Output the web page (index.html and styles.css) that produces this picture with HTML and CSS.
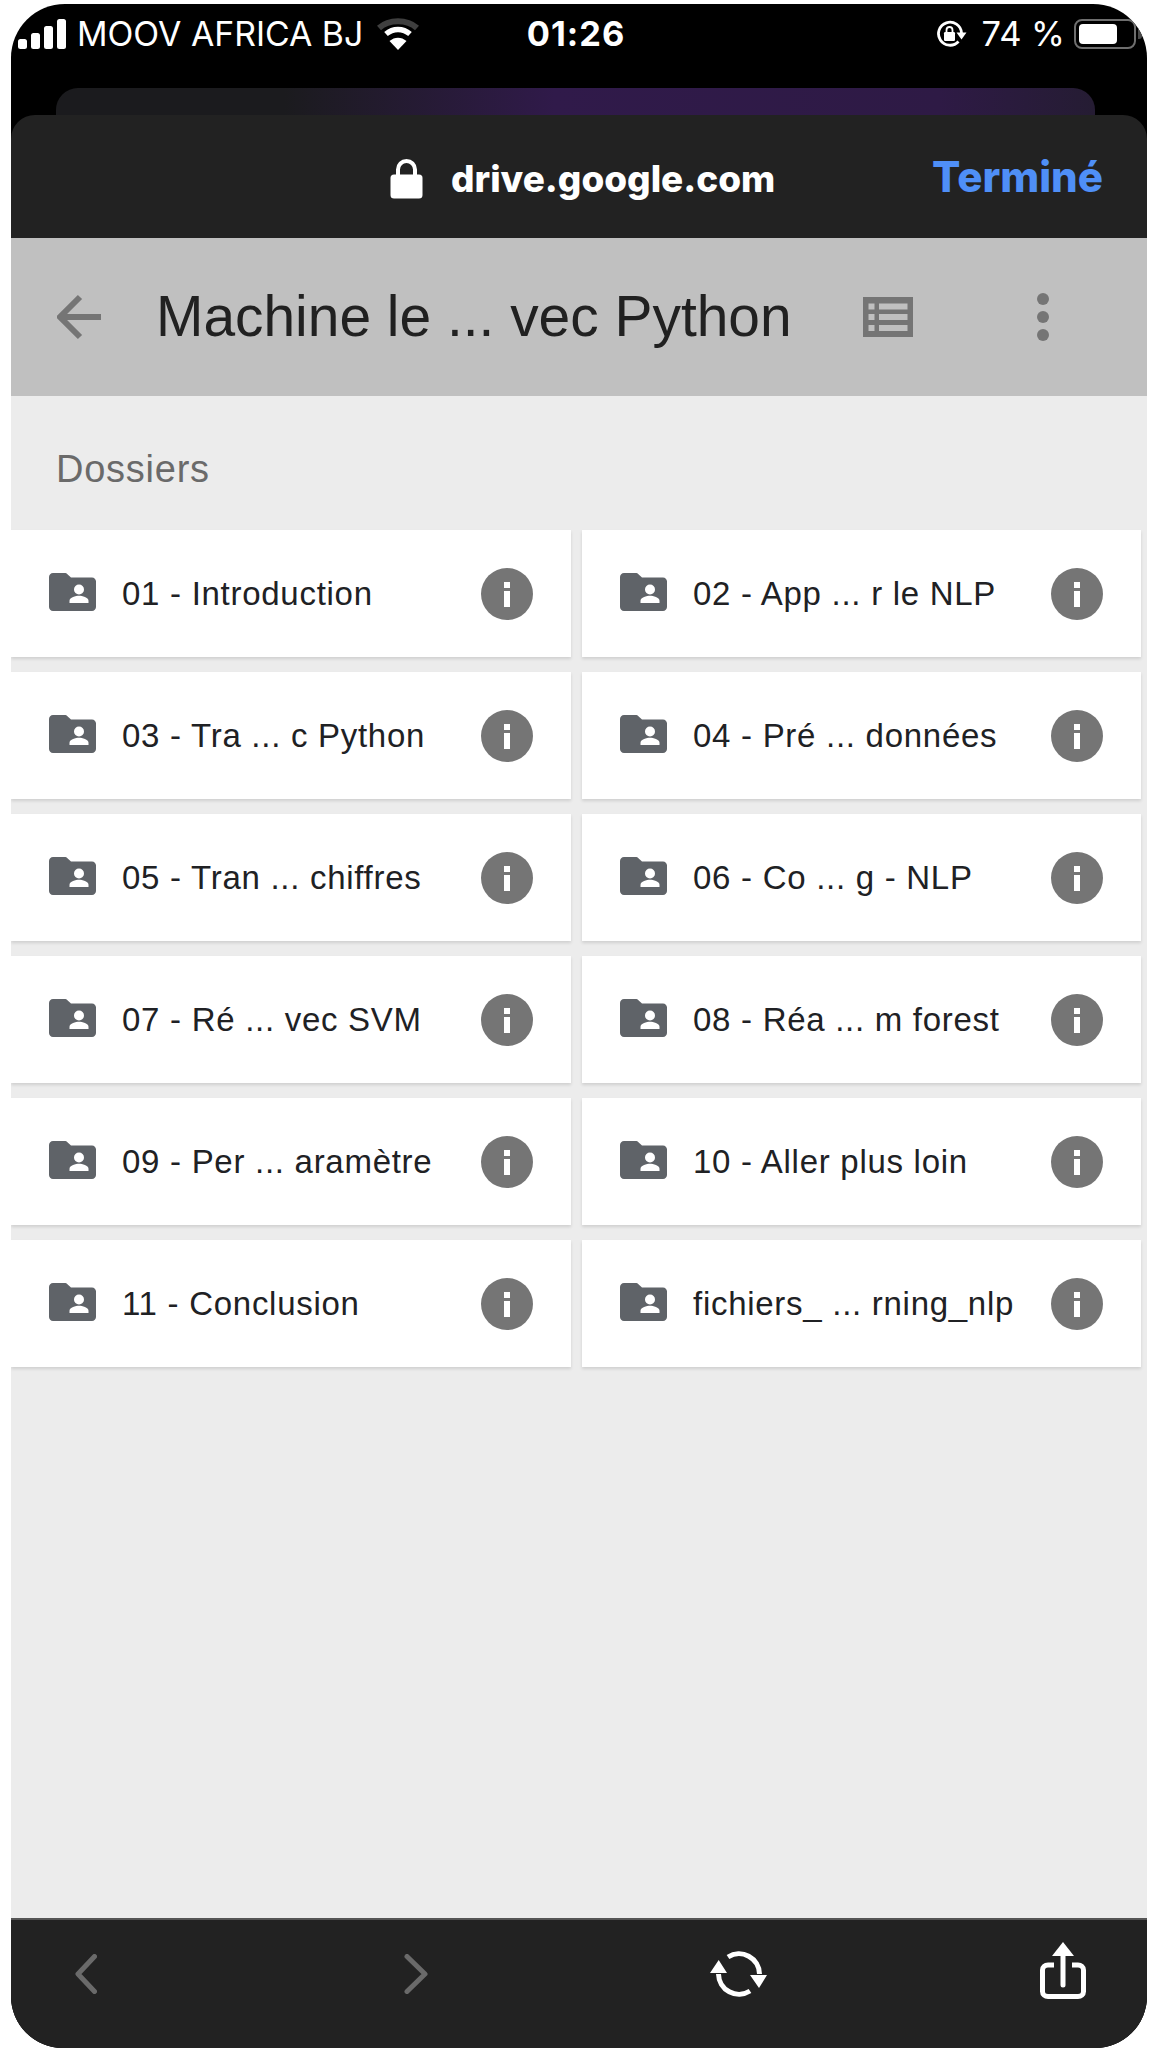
FILE: index.html
```html
<!DOCTYPE html>
<html lang="fr">
<head>
<meta charset="utf-8">
<title>Machine learning avec Python</title>
<link rel="stylesheet" href="styles.css">
</head>
<body>
<svg class="defs" width="0" height="0" aria-hidden="true">
  <symbol id="folder" viewBox="0 0 47 38">
    <path d="M4 0h11.500c1.300 0 2.300.500 3.200 1.400L22 4.500h21c2.200 0 4 1.800 4 4V34c0 2.200-1.800 4-4 4H4c-2.200 0-4-1.800-4-4V4c0-2.200 1.800-4 4-4z" fill="#5f6368"/>
    <circle cx="30" cy="16.500" r="5" fill="#fff"/>
    <path d="M20.500 30v-2.300c0-3.300 6.300-5 9.500-5s9.500 1.700 9.500 5V30z" fill="#fff"/>
  </symbol>
  <symbol id="info" viewBox="0 0 52 52">
    <circle cx="26" cy="26" r="26" fill="#757575"/>
    <rect x="23" y="23" width="6" height="16" fill="#fff"/>
    <rect x="23" y="14" width="6" height="6" fill="#fff"/>
  </symbol>
</svg>
<div class="phone">
  <div class="status">
    <div class="status-left">
      <svg class="signal" width="49" height="30" viewBox="0 0 49 30" aria-hidden="true">
        <rect x="0" y="20" width="9" height="10" rx="2.500" fill="#fff"/>
        <rect x="13" y="14" width="9" height="16" rx="2.500" fill="#fff"/>
        <rect x="26" y="7" width="9" height="23" rx="2.500" fill="#fff"/>
        <rect x="39" y="0" width="9" height="30" rx="2.500" fill="#fff"/>
      </svg>
      <span class="carrier">MOOV AFRICA BJ</span>
      <svg class="wifi" width="42" height="32" viewBox="0 0 42 32" aria-hidden="true">
        <path d="M2 10C12 1 30 1 40 10" fill="none" stroke="#3f3f3f" stroke-width="6"/>
        <path d="M9 16c7-6 17-6 24 0" fill="none" stroke="#fff" stroke-width="5.500"/>
        <path d="M12.500 23c5-4.500 12-4.500 17 0L21 32z" fill="#fff"/>
      </svg>
    </div>
    <span class="time">01:26</span>
    <div class="status-right">
      <svg class="rotlock" width="31" height="27" viewBox="0 0 31 27" aria-hidden="true">
        <path d="M22.500 21.500A11.500 11.500 0 1 1 25.500 13" fill="none" stroke="#fff" stroke-width="2.800"/>
        <path d="M20.500 12.500h10l-5 7z" fill="#fff"/>
        <rect x="8" y="12" width="11" height="9" rx="1.200" fill="#fff"/>
        <path d="M10.500 12v-2a3 3 0 0 1 6 0v2" fill="none" stroke="#fff" stroke-width="1.800"/>
      </svg>
      <span class="battery-text">74 %</span>
      <div class="battery"><div class="battery-fill"></div></div>
      <div class="battery-cap"></div>
    </div>
  </div>
  <div class="backcard"></div>
  <div class="sheet">
    <div class="urlbar">
      <div class="url">
        <svg class="lock" width="33" height="40" viewBox="0 0 33 40" aria-hidden="true">
          <path d="M8 18v-7.500a8.500 8.500 0 0 1 17 0V18" fill="none" stroke="#fff" stroke-width="4"/>
          <rect x="0.500" y="15.500" width="32" height="24" rx="3.500" fill="#fff"/>
        </svg>
        <span class="domain">drive.google.com</span>
      </div>
      <span class="done">Terminé</span>
    </div>
    <div class="toolbar">
      <svg class="back" width="46" height="46" viewBox="0 0 46 46" aria-hidden="true">
        <path d="M44 23H5M23 3L3 23l20 20" fill="none" stroke="#757575" stroke-width="6"/>
      </svg>
      <h1 class="title">Machine le ... vec Python</h1>
      <svg class="listicon" width="50" height="40" viewBox="0 0 50 40" aria-hidden="true">
        <path fill="#757575" fill-rule="evenodd" d="M0 0h50v40H0zM5.500 6.500v6h6v-6zM16 6.500v6h28.500v-6zM5.500 17v6h6v-6zM16 17v6h28.500v-6zM5.500 28v6h6v-6zM16 28v6h28.500v-6z"/>
      </svg>
      <div class="dots"><i></i><i></i><i></i></div>
    </div>
    <main class="content">
      <h2 class="section">Dossiers</h2>
      <div class="grid">
        <div class="card"><svg class="folder"><use href="#folder"/></svg><span class="name">01 - Introduction</span><svg class="info"><use href="#info"/></svg></div>
        <div class="card"><svg class="folder"><use href="#folder"/></svg><span class="name">02 - App ... r le NLP</span><svg class="info"><use href="#info"/></svg></div>
        <div class="card"><svg class="folder"><use href="#folder"/></svg><span class="name">03 - Tra ... c Python</span><svg class="info"><use href="#info"/></svg></div>
        <div class="card"><svg class="folder"><use href="#folder"/></svg><span class="name">04 - Pré ... données</span><svg class="info"><use href="#info"/></svg></div>
        <div class="card"><svg class="folder"><use href="#folder"/></svg><span class="name">05 - Tran ... chiffres</span><svg class="info"><use href="#info"/></svg></div>
        <div class="card"><svg class="folder"><use href="#folder"/></svg><span class="name">06 - Co ... g - NLP</span><svg class="info"><use href="#info"/></svg></div>
        <div class="card"><svg class="folder"><use href="#folder"/></svg><span class="name">07 - Ré ... vec SVM</span><svg class="info"><use href="#info"/></svg></div>
        <div class="card"><svg class="folder"><use href="#folder"/></svg><span class="name">08 - Réa ... m forest</span><svg class="info"><use href="#info"/></svg></div>
        <div class="card"><svg class="folder"><use href="#folder"/></svg><span class="name">09 - Per ... aramètre</span><svg class="info"><use href="#info"/></svg></div>
        <div class="card"><svg class="folder"><use href="#folder"/></svg><span class="name">10 - Aller plus loin</span><svg class="info"><use href="#info"/></svg></div>
        <div class="card"><svg class="folder"><use href="#folder"/></svg><span class="name">11 - Conclusion</span><svg class="info"><use href="#info"/></svg></div>
        <div class="card"><svg class="folder"><use href="#folder"/></svg><span class="name">fichiers_ ... rning_nlp</span><svg class="info"><use href="#info"/></svg></div>
      </div>
    </main>
    <div class="bottombar">
      <svg class="nav nav-back" width="22" height="40" viewBox="0 0 22 40" aria-hidden="true">
        <path d="M19.500 2.500L3 20l16.500 17.500" fill="none" stroke="#6a6a6a" stroke-width="5" stroke-linecap="round" stroke-linejoin="round"/>
      </svg>
      <svg class="nav nav-forward" width="24" height="40" viewBox="0 0 24 40" aria-hidden="true">
        <path d="M3 2.500L21 20 3 37.500" fill="none" stroke="#6a6a6a" stroke-width="5" stroke-linecap="round" stroke-linejoin="round"/>
      </svg>
      <svg class="nav nav-reload" width="57" height="46" viewBox="0 0 57 46" aria-hidden="true">
        <path d="M18 6A20.500 20.500 0 0 1 49.500 23M40 40A20.500 20.500 0 0 1 8.500 23" fill="none" stroke="#fff" stroke-width="5"/>
        <path d="M0 22L8.700 9 17 22zM40 24h17l-8 13z" fill="#fff"/>
      </svg>
      <svg class="nav nav-share" width="46" height="57" viewBox="0 0 46 57" aria-hidden="true">
        <path d="M14 23H8c-3 0-5.500 2-5.500 5v21.500c0 3 2.500 5 5.500 5h30c3 0 5.500-2 5.500-5V28c0-3-2.500-5-5.500-5h-6" fill="none" stroke="#fff" stroke-width="5"/>
        <path d="M23 8v35" stroke="#fff" stroke-width="5" stroke-linecap="round"/>
        <path d="M23 0l11 14H12z" fill="#fff"/>
      </svg>
    </div>
  </div>
</div>
</body>
</html>
```
FILE: styles.css
```css
* { box-sizing: border-box; }
html, body { margin: 0; padding: 0; background: #fff; }
body { width: 1152px; height: 2048px; overflow: hidden; font-family: "Liberation Sans", Arial, sans-serif; }
.defs { position: absolute; }
.phone {
  margin: 4px 0 0 11px;
  width: 1136px;
  height: 2044px;
  background: #000;
  border-radius: 54px 54px 52px 52px;
  overflow: hidden;
  display: flex;
  flex-direction: column;
}
.status {
  height: 55px;
  flex: none;
  padding: 4px 5px 0 7px;
  display: grid;
  grid-template-columns: 1fr auto 1fr;
  align-items: center;
  color: #fff;
}
.status-left { display: flex; align-items: center; }
.signal { flex: none; }
.carrier { margin-left: 10px; font: 400 33.800px "Inter", "Liberation Sans", sans-serif; white-space: nowrap; }
.wifi { margin-left: 14px; flex: none; }
.time { margin-right: 8px; font: 700 34.400px "Inter", "Liberation Sans", sans-serif; letter-spacing: 1px; }
.status-right { display: flex; align-items: center; justify-content: flex-end; }
.rotlock { flex: none; }
.battery-text { margin-left: 15px; font: 400 34.500px "Inter", "Liberation Sans", sans-serif; }
.battery { margin-left: 9px; width: 62px; height: 30px; border: 2px solid #6e6e6e; border-radius: 8px; padding: 3px; }
.battery-fill { width: 38px; height: 100%; background: #fff; border-radius: 4px; }
.battery-cap { width: 4px; height: 11px; margin-left: 2px; background: #4a4a4a; border-radius: 0 3px 3px 0; }
.backcard {
  flex: none;
  height: 28px;
  margin: 29px 52px -1px 45px;
  border-radius: 22px 22px 0 0;
  background: linear-gradient(90deg, #1b1b1e 0%, #1b1b1e 22%, #301a4a 48%, #2e1a45 85%, #251c33 100%);
}
.sheet {
  flex: 1;
  min-height: 0;
  display: flex;
  flex-direction: column;
  border-radius: 24px 24px 0 0;
  background: #222;
  overflow: hidden;
}
.urlbar { flex: none; height: 123px; position: relative; display: flex; align-items: center; justify-content: flex-end; padding: 0 44px 0 0; }
.url { position: absolute; left: 379px; top: 41px; display: flex; align-items: center; }
.lock { flex: none; }
.domain { margin-left: 28px; color: #fff; font: 800 36.900px "Inter", "Liberation Sans", sans-serif; white-space: nowrap; }
.done { color: #4f8ff7; font: 800 42px "Inter", "Liberation Sans", sans-serif; }
.toolbar { flex: none; height: 158px; background: #c0c0c0; display: flex; align-items: center; padding-left: 46px; }
.back { flex: none; }
.title { margin: -3px 0 0 53px; width: 633px; flex: none; font: 400 56.900px "Liberation Sans", sans-serif; color: #212121; white-space: nowrap; }
.listicon { flex: none; margin-left: 74px; }
.dots { margin-left: 124px; display: flex; flex-direction: column; gap: 6px; }
.dots i { display: block; width: 12px; height: 12px; border-radius: 50%; background: #757575; }
.content { flex: 1; min-height: 0; background: #ececec; }
.section { margin: 0; height: 134px; padding: 51px 0 0 45px; font: 400 38px/44px "Liberation Sans", sans-serif; letter-spacing: .75px; color: #6a6a6a; }
.grid { display: grid; grid-template-columns: 560px 559px; column-gap: 11px; row-gap: 15px; }
.card { height: 127px; background: #fff; box-shadow: 0 2px 3px rgba(0,0,0,.12); display: flex; align-items: center; padding: 0 38px 0 38px; }
.folder { width: 47px; height: 38px; flex: none; margin-top: -4px; }
.name { margin-left: 26px; flex: 1; font-size: 33px; letter-spacing: .72px; color: #202124; white-space: nowrap; }
.info { width: 52px; height: 52px; flex: none; }
.bottombar { flex: none; height: 130px; background: #222; border-top: 2px solid #555; display: flex; align-items: center; padding-bottom: 20px; }
.nav { flex: none; }
.nav-back { margin-left: 64px; }
.nav-forward { margin-left: 307px; }
.nav-reload { margin-left: 282px; }
.nav-share { margin-left: 273px; margin-top: -8px; }
```
